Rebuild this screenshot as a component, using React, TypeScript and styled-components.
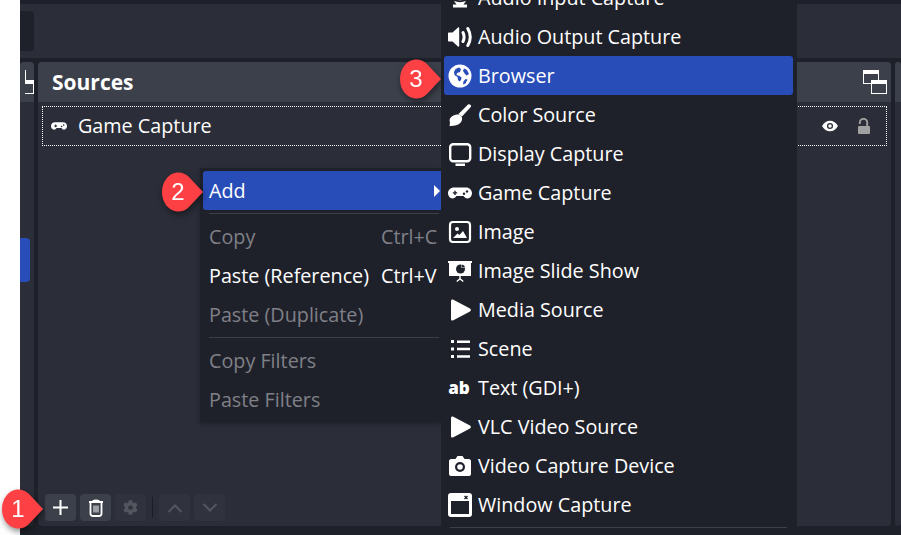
import { ReactNode } from 'react'
import styled, { createGlobalStyle } from 'styled-components'
import { FaCog } from 'react-icons/fa'

const BASE = '#1f212a'
const PANEL = '#2b2e38'
const RAISED = '#3c404b'
const BLUE = '#284cb8'

const GlobalStyle = createGlobalStyle`
  html, body {
    margin: 0;
    padding: 0;
    background: #fff;
    overflow: hidden;
  }
  body {
    font-family: "Open Sans", "Noto Sans", sans-serif;
    font-size: 19.75px;
    color: #fff;
  }
`

const Page = styled.div`
  position: relative;
  width: 901px;
  height: 535px;
  overflow: hidden;
  padding-left: 20px;
  box-sizing: border-box;
`

const Window = styled.div`
  height: 100%;
  background: ${BASE};
  display: flex;
  flex-direction: column;
  padding-top: 4px;
  box-sizing: border-box;
`

const TopBar = styled.div`
  height: 54px;
  background: ${PANEL};
  display: flex;
  align-items: center;
  flex-shrink: 0;
`

const TopInput = styled.div`
  width: 14px;
  height: 40px;
  background: ${BASE};
  border-radius: 0 4px 4px 0;
`

const Docks = styled.div`
  flex: 1;
  display: flex;
  gap: 4px;
  margin-top: 4px;
  margin-bottom: 9px;
  min-height: 0;
`

const Dock = styled.section<{ $width?: number }>`
  ${p => (p.$width ? `width: ${p.$width}px;` : 'flex: 1;')}
  flex-shrink: 0;
  background: ${PANEL};
  border-radius: 4px;
  display: flex;
  flex-direction: column;
  overflow: hidden;
`

const DockHeader = styled.header<{ $flush?: boolean }>`
  height: 40px;
  flex-shrink: 0;
  background: ${RAISED};
  display: flex;
  align-items: center;
  justify-content: ${p => (p.$flush ? 'flex-end' : 'space-between')};
  padding: ${p => (p.$flush ? '0' : '0 4px 0 14px')};
`

const DockTitle = styled.h2`
  margin: 0;
  padding-top: 1px;
  font-size: 21px;
  font-weight: 700;
  line-height: 39px;
`

const SceneSelected = styled.div`
  width: 10px;
  height: 44px;
  margin-top: 136px;
  background: ${BLUE};
  border-radius: 0 4px 4px 0;
`

const SourceRow = styled.div`
  height: 40px;
  box-sizing: border-box;
  margin: 4px 4px 0 4px;
  border: 1px dotted #fff;
  display: flex;
  align-items: center;
  padding: 0 14px 0 8px;
`

const SourceName = styled.span`
  margin-left: 11px;
  padding-bottom: 2px;
  flex: 1;
`

const RowIcons = styled.div`
  display: flex;
  align-items: center;
  gap: 18px;
`

const Toolbar = styled.div`
  margin-top: auto;
  margin-bottom: 5px;
  padding-left: 7px;
  display: flex;
  align-items: center;
  gap: 4px;
`

const ToolButton = styled.div<{ $off?: boolean }>`
  width: 31px;
  height: 27px;
  border-radius: 4px;
  background: ${p => (p.$off ? '#30333d' : RAISED)};
  color: ${p => (p.$off ? '#53565f' : '#fff')};
  display: flex;
  align-items: center;
  justify-content: center;
`

const ToolDivider = styled.div`
  width: 1px;
  height: 21px;
  background: #1b1d24;
  margin: 0 2px;
`

const Menu = styled.div`
  position: absolute;
  background: ${BASE};
  box-sizing: border-box;
`

const ContextMenu = styled(Menu)`
  left: 200px;
  top: 168px;
  width: 241px;
  height: 254px;
  padding: 3px 0 0 3px;
  box-shadow: 0 2px 4px rgba(0, 0, 0, 0.3);
`

const SubMenu = styled(Menu)`
  left: 441px;
  top: -25px;
  width: 356px;
  height: 570px;
  padding: 3px 4px 0 3px;
`

const MenuRow = styled.div<{ $active?: boolean; $off?: boolean }>`
  height: 39px;
  display: flex;
  align-items: center;
  position: relative;
  border-radius: 3px;
  padding: 0 6px;
  white-space: nowrap;
  background: ${p => (p.$active ? BLUE : 'transparent')};
  color: ${p => (p.$off ? '#7f8087' : '#fff')};
`

const ContextRow = styled(MenuRow)<{ $square?: boolean }>`
  ${p => p.$square && 'border-radius: 3px 0 0 3px;'}
`

const SourceMenuRow = styled(MenuRow)`
  padding: 0 0 0 4px;
  gap: 6px;
`

const Shortcut = styled.span`
  position: absolute;
  left: 178px;
`

const SubArrow = styled.span`
  position: absolute;
  right: 1px;
  top: 14px;
  width: 0;
  height: 0;
  border-left: 6px solid #fff;
  border-top: 6px solid transparent;
  border-bottom: 6px solid transparent;
`

const MenuSeparator = styled.div<{ $left: number; $right: number }>`
  height: 1px;
  background: ${RAISED};
  margin: 3px ${p => p.$right}px 3px ${p => p.$left}px;
`

const IconSlot = styled.span`
  width: 24px;
  height: 24px;
  flex-shrink: 0;
  display: flex;
`

const Callout = styled.div<{ $left: number; $top: number }>`
  position: absolute;
  left: ${p => p.$left}px;
  top: ${p => p.$top}px;
  width: 41px;
  height: 40px;
  filter: drop-shadow(1px 3px 3px rgba(0, 0, 0, 0.45));
`

const CalloutNumber = styled.span`
  position: absolute;
  left: 0;
  top: 0;
  width: 32px;
  line-height: 40px;
  text-align: center;
  font-family: "Liberation Sans", Arial, sans-serif;
  font-size: 24px;
  color: #fff;
`

const Pip = ({ n, left, top }: { n: number; left: number; top: number }) => (
  <Callout $left={left} $top={top}>
    <svg width="41" height="40" viewBox="0 0 41 40">
      <path
        d="M41 20 L27 35 Q22 40 15 39.5 C6 38.5 0 30 0 20 C0 10 6 1.5 15 .5 Q22 0 27 5 Z"
        fill="#fd4044"
      />
    </svg>
    <CalloutNumber>{n}</CalloutNumber>
  </Callout>
)

const Ico = ({ children }: { children: ReactNode }) => (
  <IconSlot>
    <svg width="24" height="24" viewBox="0 0 24 24" fill="#fff">
      {children}
    </svg>
  </IconSlot>
)

const Gamepad = ({ size = 24 }: { size?: number }) => (
  <svg width={size} height={size} viewBox="0 0 24 24">
    <path
      d="M6 6.500h12c3.400 0 6 2.600 6 5.600 0 3-2 5.400-4.400 5.400-2 0-3-1.400-4-2.600H8.400c-1 1.200-2 2.600-4 2.600C2 17.500 0 15.100 0 12.100 0 9.100 2.600 6.500 6 6.500z"
      fill="#fff"
    />
    <path d="M4.800 11.200h1.500V9.800h1.400v1.400h1.500v1.400H7.700V14H6.300v-1.400H4.800z" fill={BASE} />
    <circle cx="16" cy="12.800" r="1.200" fill={BASE} />
    <circle cx="19" cy="10.500" r="1.200" fill={BASE} />
  </svg>
)

const WindowsIcon = () => (
  <svg width="24" height="24" viewBox="0 0 24 24" fill="none" stroke="#fff">
    <rect x="0.500" y="0.500" width="15" height="13" strokeWidth="1" />
    <path d="M0 2.500h16" strokeWidth="3" />
    <rect x="8.500" y="10.500" width="15" height="13" fill="#3c404b" strokeWidth="1" />
    <path d="M8 12.500h16" strokeWidth="3" />
  </svg>
)

const PlayIcon = () => (
  <Ico>
    <path d="M3 3c0-1.500 1.200-2 2.400-1.300l16.600 8.800c1.200.6 1.200 2.400 0 3L5.400 22.300C4.200 23 3 22.500 3 21z" />
  </Ico>
)

const sources: { label: string; icon: ReactNode; active?: boolean }[] = [
  {
    label: 'Audio Input Capture',
    icon: (
      <Ico>
        <circle cx="12" cy="6" r="7" fill="none" stroke="#fff" strokeWidth="2.500" />
        <circle cx="12" cy="6" r="2.500" />
        <path d="M6 15c4 1.500 8 1.500 12 0l-2.500 3.500H19v3H5v-3h3.500z" />
      </Ico>
    )
  },
  {
    label: 'Audio Output Capture',
    icon: (
      <Ico>
        <path d="M1 7.500h3.500L10 2.500c.6-.5 1.200-.2 1.200.6v17.800c0 .8-.6 1.100-1.200.6l-5.500-5H1c-.6 0-1-.4-1-1v-7c0-.6.4-1 1-1z" />
        <path
          d="M15 7.500c1.400 2.900 1.400 6.100 0 9M19.800 3.500c3.200 5.500 3.200 11.500 0 17"
          fill="none"
          stroke="#fff"
          strokeWidth="3"
          strokeLinecap="round"
        />
      </Ico>
    )
  },
  {
    label: 'Browser',
    active: true,
    icon: (
      <Ico>
        <circle cx="12" cy="12" r="11.500" />
        <path
          d="M7.500 5l3.500-1.500 2 1.500-1 3-3 1-.5 2 3 1 2 1.500-.5 2.500-1.500 1.500-1.500-1.500-.5-3-3-2-.5-3z"
          fill={BLUE}
        />
        <path d="M16 4.500l3 1.500 2 4-2.500 1.500-1.500-1.500-2-3z" fill={BLUE} />
        <path d="M17.500 15l2 .5-2 4-2.500 1 .5-3z" fill={BLUE} />
      </Ico>
    )
  },
  {
    label: 'Color Source',
    icon: (
      <Ico>
        <path d="M10.500 11L20 1.500c1.200-1.100 3.700.4 3 2.200L14 13.500z" />
        <path d="M9 11.500c3.200-.5 5.700 2 5 5.200-.7 3.600-5 6.600-12.500 6.200.6-2.400.6-4 0-5.400.4-3.200 3.500-5.500 7.500-6z" />
      </Ico>
    )
  },
  {
    label: 'Display Capture',
    icon: (
      <Ico>
        <rect x="2.200" y="2.200" width="20" height="17" rx="3" fill="none" stroke="#fff" strokeWidth="2.400" />
        <path d="M7.500 21.500h9.500V24H7.500z" />
      </Ico>
    )
  },
  {
    label: 'Game Capture',
    icon: (
      <IconSlot>
        <Gamepad />
      </IconSlot>
    )
  },
  {
    label: 'Image',
    icon: (
      <Ico>
        <rect x="2" y="2" width="20" height="20" rx="3" fill="none" stroke="#fff" strokeWidth="2.200" />
        <circle cx="9" cy="9" r="2" />
        <path d="M5 18l4.500-4.500 2 1.500 3.500-4 4 7z" />
      </Ico>
    )
  },
  {
    label: 'Image Slide Show',
    icon: (
      <Ico>
        <path d="M0 2h24v2h-1v13H1V4H0z" />
        <circle cx="12.500" cy="10" r="4.500" fill={BASE} />
        <path d="M13.500 9V4.500h5V9z" fill="#fff" />
        <path d="M14 5.500c1.500.3 2.800 1.700 3 3h-3z" fill={BASE} />
        <path d="M11.300 17h1.400v2.500l3 2.500-.8 1-2.900-2.300L9.100 23l-.8-1 3-2.500z" />
      </Ico>
    )
  },
  { label: 'Media Source', icon: <PlayIcon /> },
  {
    label: 'Scene',
    icon: (
      <Ico>
        <path d="M3 3h3v3H3zM3 10.500h3v3H3zM3 18h3v3H3z" />
        <path d="M9 3.500h13v2.500H9zM9 10.800h13v2.500H9zM9 18.200h13v2.500H9z" />
      </Ico>
    )
  },
  {
    label: 'Text (GDI+)',
    icon: (
      <Ico>
        <text
          x="11"
          y="18"
          textAnchor="middle"
          fontFamily="Open Sans, sans-serif"
          fontSize="17"
          fontWeight="800"
          fill="#fff"
        >
          ab
        </text>
      </Ico>
    )
  },
  { label: 'VLC Video Source', icon: <PlayIcon /> },
  {
    label: 'Video Capture Device',
    icon: (
      <Ico>
        <path d="M3 5h4.500L9.500 2h5l2 3H21c1 0 2 1 2 2v13c0 1-1 2-2 2H3c-1 0-2-1-2-2V7c0-1 1-2 2-2z" />
        <circle cx="12" cy="13" r="5" fill={BASE} />
        <circle cx="12" cy="13" r="2.800" />
      </Ico>
    )
  },
  {
    label: 'Window Capture',
    icon: (
      <Ico>
        <rect x="0" y="0" width="24" height="24" rx="3" />
        <rect x="3" y="8" width="18" height="13" fill={BASE} />
        <path d="M16.500 3l3 3M19.500 3l-3 3" stroke={BASE} strokeWidth="1.300" />
      </Ico>
    )
  }
]

export default function App() {
  return (
    <Page>
      <GlobalStyle />
      <Window>
        <TopBar>
          <TopInput />
        </TopBar>
        <Docks>
          <Dock $width={14}>
            <DockHeader $flush>
              <svg width="9" height="24" viewBox="15 0 9 24" fill="none" stroke="#fff">
                <rect x="0.500" y="0.500" width="15" height="13" />
                <path d="M0 2.500h16" strokeWidth="3" />
                <rect x="8.500" y="10.500" width="15" height="13" fill={RAISED} />
                <path d="M8 12.500h16" strokeWidth="3" />
              </svg>
            </DockHeader>
            <SceneSelected />
          </Dock>
          <Dock>
            <DockHeader>
              <DockTitle>Sources</DockTitle>
              <WindowsIcon />
            </DockHeader>
            <SourceRow>
              <Gamepad size={16} />
              <SourceName>Game Capture</SourceName>
              <RowIcons>
                <svg width="16" height="16" viewBox="0 0 24 24">
                  <path d="M0 12c3-5 7-8 12-8s9 3 12 8c-3 5-7 8-12 8S3 17 0 12z" fill="#fff" />
                  <circle cx="12" cy="12" r="4.600" fill={PANEL} />
                  <circle cx="12" cy="12" r="2.600" fill="#fff" />
                </svg>
                <svg width="16" height="16" viewBox="0 0 16 16">
                  <path
                    d="M3.800 6V4.500a3.700 3.700 0 0 1 7.400 0V8"
                    fill="none"
                    stroke="#a0a0a0"
                    strokeWidth="1.900"
                  />
                  <rect x="2" y="8" width="12" height="8" rx="1" fill="#a0a0a0" />
                </svg>
              </RowIcons>
            </SourceRow>
            <Toolbar>
              <ToolButton>
                <svg width="15" height="15" viewBox="0 0 15 15" stroke="#fff" strokeWidth="2">
                  <path d="M7.500 0v15M0 7.500h15" />
                </svg>
              </ToolButton>
              <ToolButton>
                <svg width="16" height="18" viewBox="0 0 16 18" fill="none" stroke="#fff">
                  <path d="M1 3h14M5 2.500c0-1.500 6-1.500 6 0" strokeWidth="2" />
                  <path
                    d="M2.500 4v10.500C2.500 16 3.500 17 5 17h6c1.500 0 2.500-1 2.500-2.500V4"
                    strokeWidth="1.800"
                  />
                  <path d="M6 6.500v7M8 6.500v7M10 6.500v7" strokeWidth="1" />
                </svg>
              </ToolButton>
              <ToolButton $off>
                <FaCog size={15} />
              </ToolButton>
              <ToolDivider />
              <ToolButton $off>
                <svg width="16" height="10" viewBox="0 0 16 10" fill="none" stroke="currentColor" strokeWidth="2">
                  <path d="M1.500 9L8 2.500 14.500 9" />
                </svg>
              </ToolButton>
              <ToolButton $off>
                <svg width="16" height="10" viewBox="0 0 16 10" fill="none" stroke="currentColor" strokeWidth="2">
                  <path d="M1.500 1L8 7.500 14.500 1" />
                </svg>
              </ToolButton>
            </Toolbar>
          </Dock>
          <Dock $width={6}>
            <DockHeader $flush />
          </Dock>
        </Docks>
      </Window>

      <ContextMenu>
        <ContextRow $active $square>
          Add
          <SubArrow />
        </ContextRow>
        <MenuSeparator $left={6} $right={2} />
        <ContextRow $off>
          Copy<Shortcut>Ctrl+C</Shortcut>
        </ContextRow>
        <ContextRow>
          Paste (Reference)<Shortcut>Ctrl+V</Shortcut>
        </ContextRow>
        <ContextRow $off>Paste (Duplicate)</ContextRow>
        <MenuSeparator $left={6} $right={2} />
        <ContextRow $off>Copy Filters</ContextRow>
        <ContextRow $off>Paste Filters</ContextRow>
      </ContextMenu>

      <SubMenu>
        {sources.map(s => (
          <SourceMenuRow key={s.label} $active={s.active}>
            {s.icon}
            {s.label}
          </SourceMenuRow>
        ))}
        <MenuSeparator $left={6} $right={6} />
      </SubMenu>

      <Pip n={1} left={2} top={489} />
      <Pip n={2} left={162} top={172} />
      <Pip n={3} left={400} top={59} />
    </Page>
  )
}
